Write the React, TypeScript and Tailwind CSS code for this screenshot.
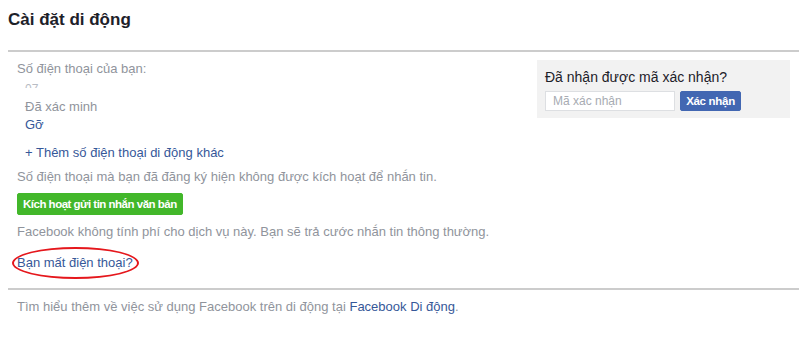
import React from 'react';

const font = "font-['Liberation_Sans',Arial,sans-serif]";

const App: React.FC = () => {
  return (
    <div className={`w-[800px] h-[341px] bg-white px-2 ${font}`}>
      <h1 className="pt-[10px] h-[50px] text-[17px] leading-[20px] font-bold text-[#1d2129]">
        Cài đặt di động
      </h1>
      <div className="h-[2px] bg-[#cccccc] w-[791px]" />

      <div className="flex justify-between pt-[8px]">
        {/* Left column */}
        <div className="pl-[9px] text-[13px] leading-[18px]">
          <div className="text-[#90949c]">Số điện thoại của bạn:</div>
          <div className="pl-[8px] mt-[4px] h-[6px] overflow-hidden text-[12px] leading-[14px] text-[#b8bcc4]">
            07
          </div>
          <div className="pl-[8px] mt-[10px] text-[#90949c]">Đã xác minh</div>
          <div className="pl-[8px] text-[#365899]">Gỡ</div>
          <div className="pl-[8px] mt-[10px] text-[#365899]">+ Thêm số điện thoại di động khác</div>
          <div className="mt-[6px] text-[#90949c]">
            Số điện thoại mà bạn đã đăng ký hiện không được kích hoạt để nhắn tin.
          </div>
          <button className="mt-[7px] h-[22px] px-[5px] bg-[#42b72a] border border-[#42b72a] rounded-[2px] text-white text-[11.5px] tracking-[-0.5px] font-bold leading-[20px]">
            Kích hoạt gửi tin nhắn văn bản
          </button>
          <div className="mt-[8px] text-[#90949c]">
            Facebook không tính phí cho dịch vụ này. Bạn sẽ trả cước nhắn tin thông thường.
          </div>
          <div className="relative mt-[13px] w-fit">
            <span className="text-[#365899]">Bạn mất điện thoại?</span>
            <div className="absolute left-[-5px] top-[-7px] w-[127px] h-[32px] rounded-[50%] border-2 border-[#e5171c]" />
          </div>
        </div>

        {/* Right panel */}
        <div className="w-[253px] h-[58px] mr-[2px] bg-[#f2f2f2] px-[8px] pt-[8px]">
          <div className="text-[14px] leading-[18px] text-[#1d2129]">Đã nhận được mã xác nhận?</div>
          <div className="flex items-center gap-[5px] mt-[5px]">
            <input
              placeholder="Mã xác nhận"
              className="w-[130px] h-[20px] bg-white border border-[#dddfe2] px-[7px] text-[12px] text-[#1d2129] placeholder:text-[#a7abb2] outline-none"
            />
            <button className="h-[20px] w-[61px] bg-[#4267b2] border border-[#4267b2] rounded-[2px] text-white text-[11.5px] tracking-[-0.3px] font-bold leading-[18px]">
              Xác nhận
            </button>
          </div>
        </div>
      </div>

      <div className="mt-[16px] h-[2px] bg-[#cccccc] w-[791px]" />
      <div className="pl-[9px] pt-[8px] text-[13px] leading-[18px] text-[#90949c]">
        Tìm hiểu thêm về việc sử dụng Facebook trên di động tại{' '}
        <span className="text-[#365899]">Facebook Di động</span>.
      </div>
    </div>
  );
};

export default App;
